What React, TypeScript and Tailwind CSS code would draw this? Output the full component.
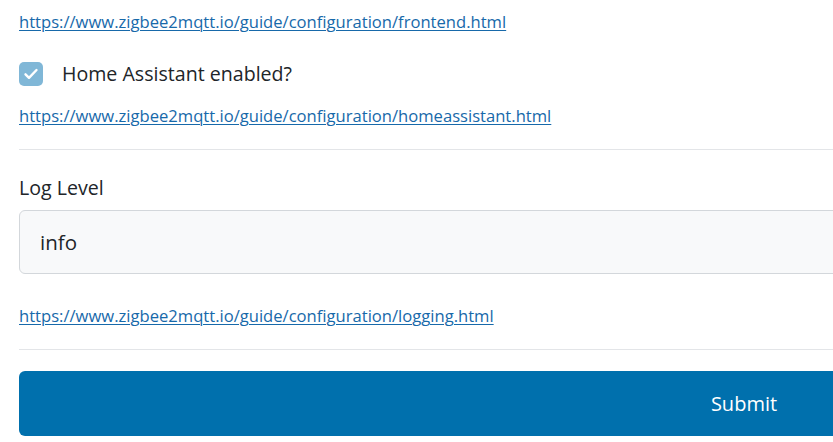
export default function App() {
  const link = "text-[16.6px] leading-[22px] text-[#1769aa] underline decoration-1 underline-offset-2";
  return (
    <div className="w-[833px] h-[442px] overflow-hidden bg-white" style={{ fontFamily: '"Open Sans", sans-serif' }}>
      <div className="w-[1490px] pl-[19px] pr-[21px] flex flex-col">
        <div className="h-[44px] flex items-center">
          <a href="#" className={link}>https://www.zigbee2mqtt.io/guide/configuration/frontend.html</a>
        </div>
        <label className="mt-[18px] h-[24px] flex items-center gap-[19px]">
          <span className="w-[24px] h-[24px] shrink-0 rounded-[5px] bg-[#80b7d7] flex items-center justify-center">
            <svg className="w-[20px] h-[20px] shrink-0" viewBox="0 0 20 20" fill="none" stroke="white" strokeWidth="2.4" strokeLinecap="round" strokeLinejoin="round">
              <path d="M4.5 10.3l3.5 3.5 7.5-7.8" />
            </svg>
          </span>
          <span className="text-[19.6px] text-[#212529]">Home Assistant enabled?</span>
        </label>
        <div className="mt-[19px] h-[22px] flex items-center">
          <a href="#" className={link}>https://www.zigbee2mqtt.io/guide/configuration/homeassistant.html</a>
        </div>
        <hr className="mt-[22px] border-0 border-t border-[#e3e5e8]" />
        <div className="mt-[26px] h-[24px] flex items-center text-[19.6px] text-[#212529]">Log Level</div>
        <div className="mt-[10px] h-[64px] rounded-[6px] border border-[#d3d7db] bg-[#f8f9fa] flex items-center pl-[20px] text-[20.5px] text-[#212529]">
          info
        </div>
        <div className="mt-[31px] h-[22px] flex items-center">
          <a href="#" className={link}>https://www.zigbee2mqtt.io/guide/configuration/logging.html</a>
        </div>
        <hr className="mt-[22px] border-0 border-t border-[#e3e5e8]" />
        <button className="mt-[21px] h-[65px] rounded-[6px] bg-[#0070ad] text-white text-[20px]">Submit</button>
      </div>
    </div>
  );
}
